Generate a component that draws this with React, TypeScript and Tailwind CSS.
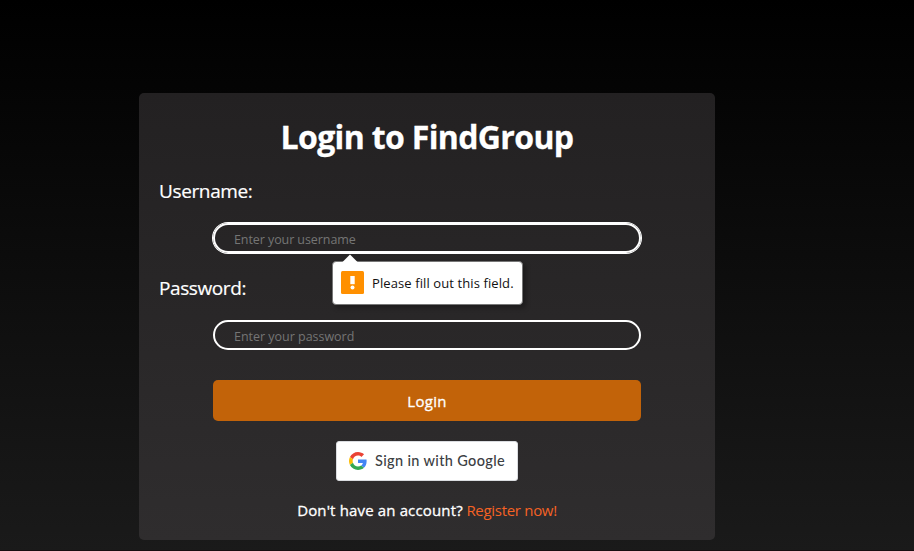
function GoogleLogo() {
  return (
    <svg viewBox="0 0 48 48" className="h-[18px] w-[18px] shrink-0">
      <path fill="#EA4335" d="M24 9.5c3.54 0 6.71 1.22 9.21 3.6l6.85-6.85C35.9 2.38 30.47 0 24 0 14.62 0 6.51 5.38 2.56 13.22l7.98 6.19C12.43 13.72 17.74 9.5 24 9.5z" />
      <path fill="#4285F4" d="M46.98 24.55c0-1.57-.15-3.09-.38-4.55H24v9.02h12.94c-.58 2.96-2.26 5.48-4.78 7.18l7.73 6c4.51-4.18 7.09-10.36 7.09-17.65z" />
      <path fill="#FBBC05" d="M10.53 28.59c-.48-1.45-.76-2.99-.76-4.59s.27-3.14.76-4.59l-7.98-6.19C.92 16.46 0 20.12 0 24c0 3.88.92 7.54 2.56 10.78l7.97-6.19z" />
      <path fill="#34A853" d="M24 48c6.48 0 11.93-2.13 15.89-5.81l-7.73-6c-2.15 1.45-4.92 2.3-8.16 2.3-6.26 0-11.57-4.22-13.47-9.91l-7.98 6.19C6.51 42.62 14.62 48 24 48z" />
    </svg>
  );
}

function ValidationTooltip() {
  return (
    <div className="absolute left-[119px] top-[38px] z-10 flex h-[44px] w-[191px] items-center rounded-[4px] border border-[#777] bg-white pl-2 shadow-[3px_3px_5px_rgba(0,0,0,0.3)]">
      <svg className="absolute left-[8px] -top-[8px] h-[9px] w-[18px]" viewBox="0 0 18 9">
        <path d="M0.5 9 9 0.5 17.5 9Z" fill="#fff" />
      </svg>
      <svg className="h-[23px] w-[23px] shrink-0 -translate-y-px" viewBox="0 0 23 23">
        <rect width="23" height="23" rx="1.5" fill="#ff9000" />
        <path d="M9.3 5h4.4v8.2H9.3z" fill="#fff" />
        <circle cx="11.5" cy="16.5" r="2" fill="#fff" />
      </svg>
      <span className="ml-2 whitespace-nowrap text-[13px] leading-5 tracking-[0.1px] text-[#111]">Please fill out this field.</span>
    </div>
  );
}

export default function App() {
  return (
    <div className="h-[551px] w-[914px] overflow-hidden border-b border-[#170d10] bg-[linear-gradient(to_bottom,#000,#1a1a1a)] pl-[139px] pt-[93px] font-['Open_Sans','Noto_Sans',sans-serif] text-white">
      <form className="flex h-[447px] w-[576px] flex-col items-center rounded-[5px] bg-[linear-gradient(to_bottom,#232122,#2f2d2e)] px-5" onSubmit={(e) => e.preventDefault()}>
        <h1 className="mt-5 h-12 whitespace-nowrap text-[32px] leading-[48px] font-bold tracking-[-0.65px] [-webkit-text-stroke:0.3px_white]">Login to FindGroup</h1>
        <label htmlFor="username" className="mt-4 h-[28px] self-start text-[19px] leading-[28px] tracking-[-0.37px] [-webkit-text-stroke:0.2px_white]">Username:</label>
        <div className="relative mt-[18px] h-[30px] w-[428px]">
          <input id="username" placeholder="Enter your username" className="block h-[30px] w-full rounded-full border-2 border-white bg-transparent px-[19px] pt-0.5 text-[12.5px] tracking-[-0.08px] outline-none ring-1 ring-white placeholder:text-[#757575]" />
          <ValidationTooltip />
        </div>
        <label htmlFor="password" className="mt-[21px] h-[28px] self-start text-[19px] leading-[28px] tracking-[-0.4px] [-webkit-text-stroke:0.2px_white]">Password:</label>
        <input id="password" type="password" placeholder="Enter your password" className="mt-[18px] block h-[30px] w-[428px] rounded-full border-2 border-white bg-transparent px-[19px] pt-0.5 text-[12.5px] tracking-[-0.02px] outline-none placeholder:text-[#757575]" />
        <button className="mt-[30px] h-[41px] w-[428px] rounded-[5px] bg-[#c26309] pt-px text-[15px] leading-5 tracking-[0.3px] [-webkit-text-stroke:0.3px_white]">Login</button>
        <button type="button" className="mt-5 flex h-10 w-[182px] items-center rounded-[3px] border border-[#dadce0] bg-white pl-3 font-['Lato',sans-serif] text-[14.5px] font-medium text-[#3c4043]">
          <GoogleLogo />
          <span className="ml-2 whitespace-nowrap tracking-[0.35px]">Sign in with Google</span>
        </button>
        <p className="mt-[17px] whitespace-nowrap text-[15px] leading-6">
          <span className="tracking-[0.15px] [-webkit-text-stroke:0.3px_white]">Don't have an account?</span>
          <a className="tracking-[-0.3px] text-[#f56224]"> Register now!</a>
        </p>
      </form>
    </div>
  );
}
